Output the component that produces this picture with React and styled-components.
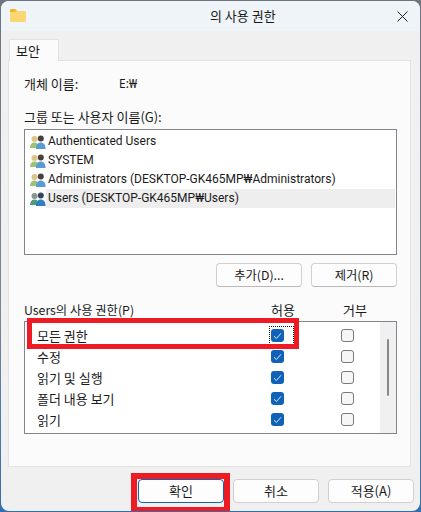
import React from 'react';
import styled, { createGlobalStyle } from 'styled-components';

const GlobalStyle = createGlobalStyle`
  html, body {
    margin: 0;
    padding: 0;
    height: 512px;
    overflow: hidden;
    background: linear-gradient(180deg, #6d7680 0%, #7b8794 60%, #2f6fb0 100%);
  }
  body {
    font-family: "Noto Sans CJK KR", "Noto Sans", sans-serif;
    font-size: 13px;
    color: #1a1a1a;
  }
`;

const users = [
  { name: 'Authenticated Users' },
  { name: 'SYSTEM' },
  { name: 'Administrators (DESKTOP-GK465MP₩Administrators)' },
  { name: 'Users (DESKTOP-GK465MP₩Users)', selected: true },
];

const permissions = [
  { name: '모든 권한', focused: true },
  { name: '수정' },
  { name: '읽기 및 실행' },
  { name: '폴더 내용 보기' },
  { name: '읽기' },
];

const FolderIcon = () => (
  <svg width="16" height="13" viewBox="0 0 16 13">
    <path d="M0 1.500C0 .7.6 0 1.400 0h3.800l2 2H6L4.500 3.500H0z" fill="#f5b51f" />
    <path d="M0 3.500h4.700L6.400 2h8.200c.8 0 1.400.6 1.400 1.400v8.200c0 .8-.6 1.400-1.400 1.400H1.400C.6 13 0 12.400 0 11.600z" fill="#fbd774" />
  </svg>
);

const CloseIcon = () => (
  <svg width="11" height="11" viewBox="0 0 11 11">
    <path d="M.5.5l10 10M10.500.5l-10 10" stroke="#1c1c1c" strokeWidth="1" fill="none" />
  </svg>
);

const GroupIcon = ({ dim }) => (
  <svg width="16" height="16" viewBox="0 0 16 16">
    <circle cx="4.500" cy="5" r="3" fill={dim ? '#87978f' : '#dcc48c'} />
    <path d="M0 14c0-3.500 1.800-5.500 4.500-5.500S9 10.500 9 14z" fill={dim ? '#4f9a78' : '#9cc274'} />
    <circle cx="10.800" cy="4.600" r="3" fill={dim ? '#33495a' : '#4a4038'} />
    <path d="M6 15c0-4.200 1.900-6.500 4.800-6.500s4.800 2.300 4.800 6.500z" fill={dim ? '#2f7fc4' : '#5b9bd5'} />
  </svg>
);

const CheckMark = () => (
  <svg width="9" height="8" viewBox="0 0 9 8">
    <path d="M1 4.200l2.400 2.300L8 1.300" stroke="#dfeaf6" strokeWidth="1" fill="none" />
  </svg>
);

const App = () => (
  <>
    <GlobalStyle />
    <Dialog>
      <TitleBar>
        <TitleIcon><FolderIcon /></TitleIcon>
        <Title>의 사용 권한</Title>
        <CloseButton><CloseIcon /></CloseButton>
      </TitleBar>

      <Body>
        <Tab>보안</Tab>
        <Panel>
          <ObjectRow>
            <ObjectLabel>개체 이름:</ObjectLabel>
            <ObjectValue>E:₩</ObjectValue>
          </ObjectRow>

          <GroupLabel>그룹 또는 사용자 이름(G):</GroupLabel>
          <UserList>
            {users.map((user) => (
              <UserRow key={user.name}>
                <GroupIcon dim={user.selected} />
                <UserName $selected={user.selected}>{user.name}</UserName>
              </UserRow>
            ))}
          </UserList>

          <ListButtons>
            <Button>추가(D)...</Button>
            <Button>제거(R)</Button>
          </ListButtons>

          <PermissionHeader>
            <PermissionTitle>Users의 사용 권한(P)</PermissionTitle>
            <AllowHead>허용</AllowHead>
            <DenyHead>거부</DenyHead>
          </PermissionHeader>

          <PermissionBox>
            <PermissionRows>
              {permissions.map((perm) => (
                <PermissionRow key={perm.name}>
                  <PermissionName>{perm.name}</PermissionName>
                  <AllowCell $focused={perm.focused}>
                    <Checkbox $checked><CheckMark /></Checkbox>
                  </AllowCell>
                  <DenyCell>
                    <Checkbox />
                  </DenyCell>
                </PermissionRow>
              ))}
            </PermissionRows>
            <ScrollTrack><ScrollThumb /></ScrollTrack>
            <RowHighlight />
          </PermissionBox>
        </Panel>

        <Footer>
          <FooterButton $primary>
            확인
            <ButtonHighlight />
          </FooterButton>
          <FooterButton>취소</FooterButton>
          <FooterButton>적용(A)</FooterButton>
        </Footer>
      </Body>
    </Dialog>
  </>
);

export default App;

const Dialog = styled.div`
  width: 419px;
  height: 510px;
  margin: 1px 0 0 1px;
  border-radius: 8px;
  overflow: hidden;
  background: #f0f0f0;
  display: flex;
  flex-direction: column;
`;

const TitleBar = styled.div`
  height: 30px;
  flex: none;
  display: flex;
  align-items: center;
  position: relative;
  background: #eff4f9;
`;

const TitleIcon = styled.div`
  display: flex;
  margin: -1px 0 0 9px;
`;

const Title = styled.div`
  position: absolute;
  left: 209px;
  top: 7px;
  line-height: 16px;
  white-space: nowrap;
`;

const CloseButton = styled.div`
  display: flex;
  margin: 0 0 0 auto;
  padding-right: 12px;
`;

const Body = styled.div`
  flex: 1;
  padding: 8px 6px 0 7px;
  display: flex;
  flex-direction: column;
`;

const Tab = styled.div`
  width: 50px;
  height: 22px;
  box-sizing: border-box;
  margin-left: 1px;
  padding-left: 6px;
  line-height: 21px;
  background: #fbfbfb;
  border: 1px solid #e2e2e2;
  border-bottom: none;
  margin-bottom: -1px;
  position: relative;
  z-index: 1;
`;

const Panel = styled.div`
  width: 403px;
  height: 407px;
  box-sizing: border-box;
  background: #fbfbfb;
  border: 1px solid #e2e2e2;
  padding: 15px 13px 0 15px;
`;

const ObjectRow = styled.div`
  display: flex;
  height: 16px;
  line-height: 16px;
  margin-bottom: 17px;
`;

const ObjectLabel = styled.span`
  width: 95px;
`;

const ObjectValue = styled.span`
  font-family: "Noto Sans", sans-serif;
  font-size: 12px;
`;

const GroupLabel = styled.div`
  height: 16px;
  line-height: 16px;
  margin-bottom: 4px;
`;

const UserList = styled.div`
  height: 126px;
  box-sizing: border-box;
  background: #fff;
  border: 1px solid #82868c;
  padding: 2px 1px 0 5px;
`;

const UserRow = styled.div`
  height: 19px;
  display: flex;
  align-items: center;
`;

const UserName = styled.div`
  flex: 1;
  height: 19px;
  line-height: 19px;
  padding-left: 2px;
  font-family: Roboto, sans-serif;
  font-size: 12px;
  background: ${(p) => (p.$selected ? '#eeeeee' : 'transparent')};
  white-space: nowrap;
`;

const ListButtons = styled.div`
  display: flex;
  justify-content: flex-end;
  gap: 9px;
  margin-top: 8px;
`;

const Button = styled.div`
  width: 86px;
  height: 24px;
  box-sizing: border-box;
  border: 1px solid #d0d0d0;
  border-bottom-color: #b8b8b8;
  border-radius: 4px;
  background: #fdfdfd;
  text-align: center;
  line-height: 22px;
  font-size: 12.300px;
`;

const PermissionHeader = styled.div`
  display: flex;
  height: 16px;
  line-height: 16px;
  margin-top: 15px;
  margin-bottom: 3px;
`;

const PermissionTitle = styled.div`
  width: 247px;
  font-size: 12.300px;
`;

const AllowHead = styled.div`
  width: 72px;
`;

const DenyHead = styled.div``;

const PermissionBox = styled.div`
  height: 113px;
  box-sizing: border-box;
  border: 1px solid #82868c;
  background: #fff;
  display: flex;
  position: relative;
`;

const PermissionRows = styled.div`
  flex: 1;
  padding-top: 3px;
`;

const PermissionRow = styled.div`
  height: 21px;
  display: flex;
  align-items: center;
`;

const PermissionName = styled.div`
  width: 244px;
  padding-left: 12px;
  box-sizing: border-box;
`;

const AllowCell = styled.div`
  width: 25px;
  height: 19px;
  padding-left: 2px;
  box-sizing: border-box;
  display: flex;
  align-items: center;
  outline: ${(p) => (p.$focused ? '1px dotted #111' : 'none')};
  outline-offset: -1px;
`;

const DenyCell = styled.div`
  margin-left: 47px;
  display: flex;
`;

const Checkbox = styled.div`
  width: 13px;
  height: 13px;
  box-sizing: border-box;
  border-radius: 3px;
  display: flex;
  align-items: center;
  justify-content: center;
  background: ${(p) => (p.$checked ? '#0f62b8' : '#f6f6f6')};
  border: ${(p) => (p.$checked ? 'none' : '1px solid #7a7a7a')};
`;

const ScrollTrack = styled.div`
  width: 16px;
  flex: none;
  background: #f0f0f0;
  padding-top: 17px;
  box-sizing: border-box;
`;

const ScrollThumb = styled.div`
  width: 2px;
  height: 57px;
  margin-left: 7px;
  border-radius: 1px;
  background: #8a8a8a;
`;

const RowHighlight = styled.div`
  position: absolute;
  left: 2px;
  top: -4px;
  width: 272px;
  height: 31px;
  box-sizing: border-box;
  border: 5px solid #ed1c24;
  pointer-events: none;
`;

const Footer = styled.div`
  display: flex;
  justify-content: flex-end;
  gap: 9px;
  margin-top: 12px;
`;

const FooterButton = styled.div`
  width: 86px;
  height: 24px;
  box-sizing: border-box;
  border: 1px solid ${(p) => (p.$primary ? '#0f62b8' : '#d0d0d0')};
  border-radius: 4px;
  background: #fdfdfd;
  text-align: center;
  line-height: 22px;
  position: relative;
`;

const ButtonHighlight = styled.div`
  position: absolute;
  left: -8px;
  top: -7px;
  width: 99px;
  height: 40px;
  box-sizing: border-box;
  border: 6px solid #ed1c24;
  pointer-events: none;
`;
